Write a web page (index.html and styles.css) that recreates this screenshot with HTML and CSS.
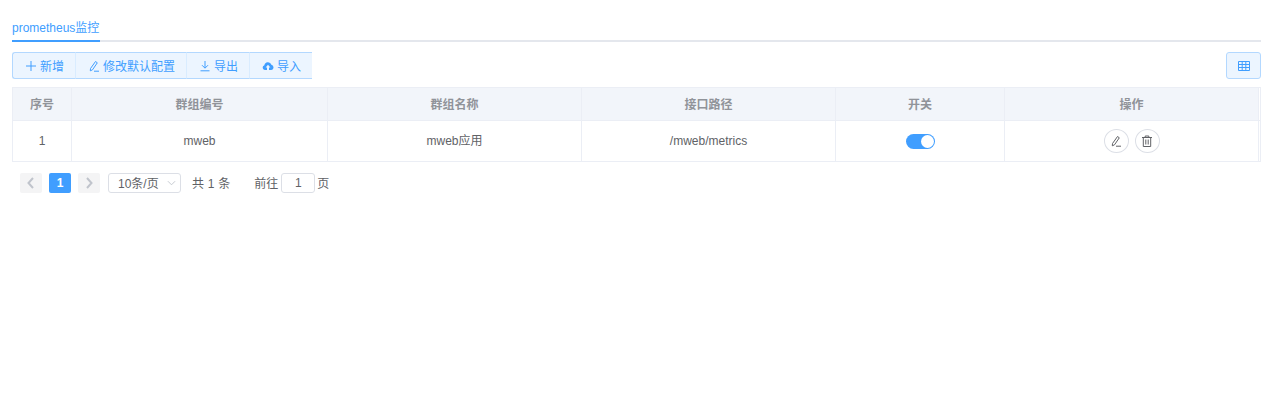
FILE: index.html
```html
<!DOCTYPE html>
<html lang="zh-CN">
<head>
    <meta charset="UTF-8">
    <title>prometheus监控</title>
    <link rel="stylesheet" href="styles.css">
</head>
<body>
    <div class="tabs">
        <div class="tab-active">prometheus监控</div>
    </div>

    <div class="toolbar">
        <div class="btn-group">
            <button class="btn btn-add">
                <svg class="btn-icon" viewBox="0 0 12 12"><path d="M6 1v10M1 6h10" fill="none" stroke="#409eff" stroke-width="1"/></svg>
                新增
            </button>
            <button class="btn btn-config">
                <svg class="btn-icon" viewBox="0 0 12 12"><path d="M2.5 8.5 7.5 1.5 9.3 2.8 4.5 9.8 2.3 10.8zM6 11.2h5" fill="none" stroke="#409eff" stroke-width="1"/></svg>
                修改默认配置
            </button>
            <button class="btn btn-export">
                <svg class="btn-icon" viewBox="0 0 12 12"><path d="M6 1v7M3 5.2 6 8.2 9 5.2M1.5 10.8h9" fill="none" stroke="#409eff" stroke-width="1"/></svg>
                导出
            </button>
            <button class="btn btn-import">
                <svg class="btn-icon" viewBox="0 0 12 12"><path d="M3 10H2.8A2.4 2.4 0 0 1 2.4 5.3 3.6 3.6 0 0 1 9.4 4.7 2.7 2.7 0 0 1 9.3 10H7V7.4h1.4L6 4.8 3.6 7.4H5V10z" fill="#409eff"/></svg>
                导入
            </button>
        </div>
        <button class="btn-table">
            <svg class="table-icon" viewBox="0 0 12 10"><path d="M.5.5h11v9H.5zM.5 3.5h11M.5 6.5h11M4.2.5v9M7.8.5v9" fill="none" stroke="#409eff" stroke-width="1"/></svg>
        </button>
    </div>

    <table class="data-table">
        <colgroup>
            <col class="col-index">
            <col class="col-code">
            <col class="col-name">
            <col class="col-path">
            <col class="col-switch">
            <col class="col-actions">
            <col class="col-gutter">
        </colgroup>
        <thead>
            <tr>
                <th>序号</th>
                <th>群组编号</th>
                <th>群组名称</th>
                <th>接口路径</th>
                <th>开关</th>
                <th>操作</th>
                <th class="gutter"></th>
            </tr>
        </thead>
        <tbody>
            <tr>
                <td>1</td>
                <td>mweb</td>
                <td>mweb应用</td>
                <td>/mweb/metrics</td>
                <td><span class="switch"><span class="switch-dot"></span></span></td>
                <td>
                    <div class="actions">
                        <button class="circle-btn">
                            <svg viewBox="0 0 12 12"><path d="M2.5 8.5 7.5 1.5 9.3 2.8 4.5 9.8 2.3 10.8zM6 11.2h5" fill="none" stroke="#606266" stroke-width="1"/></svg>
                        </button>
                        <button class="circle-btn">
                            <svg viewBox="0 0 12 12"><path d="M1 2.5h10M4.2 2.5V1h3.6v1.5M2.3 2.5v9h7.4v-9M4.8 4.5v5M7.2 4.5v5" fill="none" stroke="#606266" stroke-width="1"/></svg>
                        </button>
                    </div>
                </td>
                <td class="gutter"></td>
            </tr>
        </tbody>
    </table>

    <div class="pagination">
        <button class="page-btn">
            <svg viewBox="0 0 12 12"><path d="M8 1 3.5 6 8 11" fill="none" stroke="#c0c4cc" stroke-width="2"/></svg>
        </button>
        <button class="page-btn page-current">1</button>
        <button class="page-btn">
            <svg viewBox="0 0 12 12"><path d="M4 1 8.5 6 4 11" fill="none" stroke="#c0c4cc" stroke-width="2"/></svg>
        </button>
        <div class="page-size">
            <span class="page-text">10条/页</span>
            <svg viewBox="0 0 10 6"><path d="M1 1 5 5 9 1" fill="none" stroke="#c0c4cc" stroke-width="1"/></svg>
        </div>
        <span class="page-total page-text">共 1 条</span>
        <span class="page-jump">
            <span class="page-text">前往</span>
            <span class="page-input">1</span>
            <span class="page-text">页</span>
        </span>
    </div>
</body>
</html>
```

FILE: styles.css
```css
body {
    margin: 0;
    padding: 0 12px;
    background-color: #fff;
    font-family: "Liberation Sans", "Noto Sans CJK SC", sans-serif;
    font-size: 12px;
    line-height: 16px;
    color: #606266;
}

.tabs {
    display: flex;
    align-items: flex-start;
    height: 40px;
    border-bottom: 2px solid #e4e7ed;
}

.tab-active {
    height: 42px;
    padding: 20px 1px 0 0;
    box-sizing: border-box;
    border-bottom: 2px solid #409eff;
    color: #409eff;
}

.toolbar {
    display: flex;
    justify-content: space-between;
    margin-top: 10px;
}

.btn-group {
    display: flex;
}

.btn {
    display: flex;
    align-items: center;
    height: 27px;
    padding: 0 0 0 12px;
    background-color: #ecf5ff;
    border: 1px solid #b3d8ff;
    border-left-color: #d9ecff;
    border-right: none;
    color: #409eff;
    font-family: inherit;
    font-size: 12px;
}

.btn-add {
    width: 63px;
    border-left-color: #b3d8ff;
    border-radius: 3px 0 0 3px;
}

.btn-config {
    width: 111px;
}

.btn-export {
    width: 63px;
}

.btn-import {
    width: 63px;
}

.btn-icon {
    width: 12px;
    height: 12px;
    margin-right: 3px;
}

.btn-table {
    display: flex;
    align-items: center;
    justify-content: center;
    width: 35px;
    height: 27px;
    padding: 0;
    background-color: #ecf5ff;
    border: 1px solid #b3d8ff;
    border-radius: 3px;
}

.table-icon {
    width: 12px;
    height: 10px;
}

.data-table {
    width: 1249px;
    margin-top: 8px;
    border-collapse: collapse;
    table-layout: fixed;
}

.col-index { width: 59px; }
.col-code { width: 256px; }
.col-name { width: 254px; }
.col-path { width: 254px; }
.col-switch { width: 169px; }
.col-actions { width: 254px; }
.col-gutter { width: 2px; }

.data-table th,
.data-table td {
    padding: 0;
    border: 1px solid #ebeef5;
    text-align: center;
}

.data-table th {
    height: 31px;
    padding-top: 1px;
    background-color: #f2f5fa;
    color: #909399;
    font-weight: bold;
}

.data-table td {
    height: 40px;
}

.data-table .gutter {
    background-color: #fff;
}

.switch {
    display: inline-block;
    position: relative;
    width: 29px;
    height: 15px;
    border-radius: 8px;
    background-color: #409eff;
    vertical-align: middle;
}

.switch-dot {
    position: absolute;
    top: 1px;
    right: 1px;
    width: 13px;
    height: 13px;
    border-radius: 50%;
    background-color: #fff;
}

.actions {
    display: flex;
    justify-content: center;
    gap: 6px;
}

.circle-btn {
    display: flex;
    align-items: center;
    justify-content: center;
    width: 25px;
    height: 24px;
    padding: 0;
    background-color: #fff;
    border: 1px solid #dcdfe6;
    border-radius: 50%;
}

.circle-btn svg {
    width: 12px;
    height: 12px;
}

.pagination {
    display: flex;
    align-items: center;
    height: 20px;
    margin-top: 11px;
    padding-left: 8px;
}

.page-btn {
    display: flex;
    align-items: center;
    justify-content: center;
    width: 22px;
    height: 20px;
    margin-right: 7px;
    padding: 0;
    background-color: #f4f4f5;
    border: none;
    border-radius: 2px;
    font-family: inherit;
    font-size: 12px;
    font-weight: bold;
}

.page-btn svg {
    width: 12px;
    height: 12px;
}

.page-current {
    background-color: #409eff;
    color: #fff;
}

.page-text {
    padding-top: 2px;
}

.page-size {
    display: flex;
    align-items: center;
    justify-content: space-between;
    box-sizing: border-box;
    width: 73px;
    height: 20px;
    margin-left: 1px;
    padding: 0 4px 0 9px;
    border: 1px solid #dcdfe6;
    border-radius: 3px;
}

.page-size svg {
    width: 9px;
    height: 6px;
}

.page-total {
    margin-left: 11px;
    word-spacing: 0.5px;
}

.page-jump {
    display: flex;
    align-items: center;
    margin-left: 24px;
}

.page-input {
    box-sizing: border-box;
    width: 34px;
    height: 20px;
    margin: 0 2px 0 3px;
    border: 1px solid #dcdfe6;
    border-radius: 3px;
    line-height: 18px;
    text-align: center;
}
```
